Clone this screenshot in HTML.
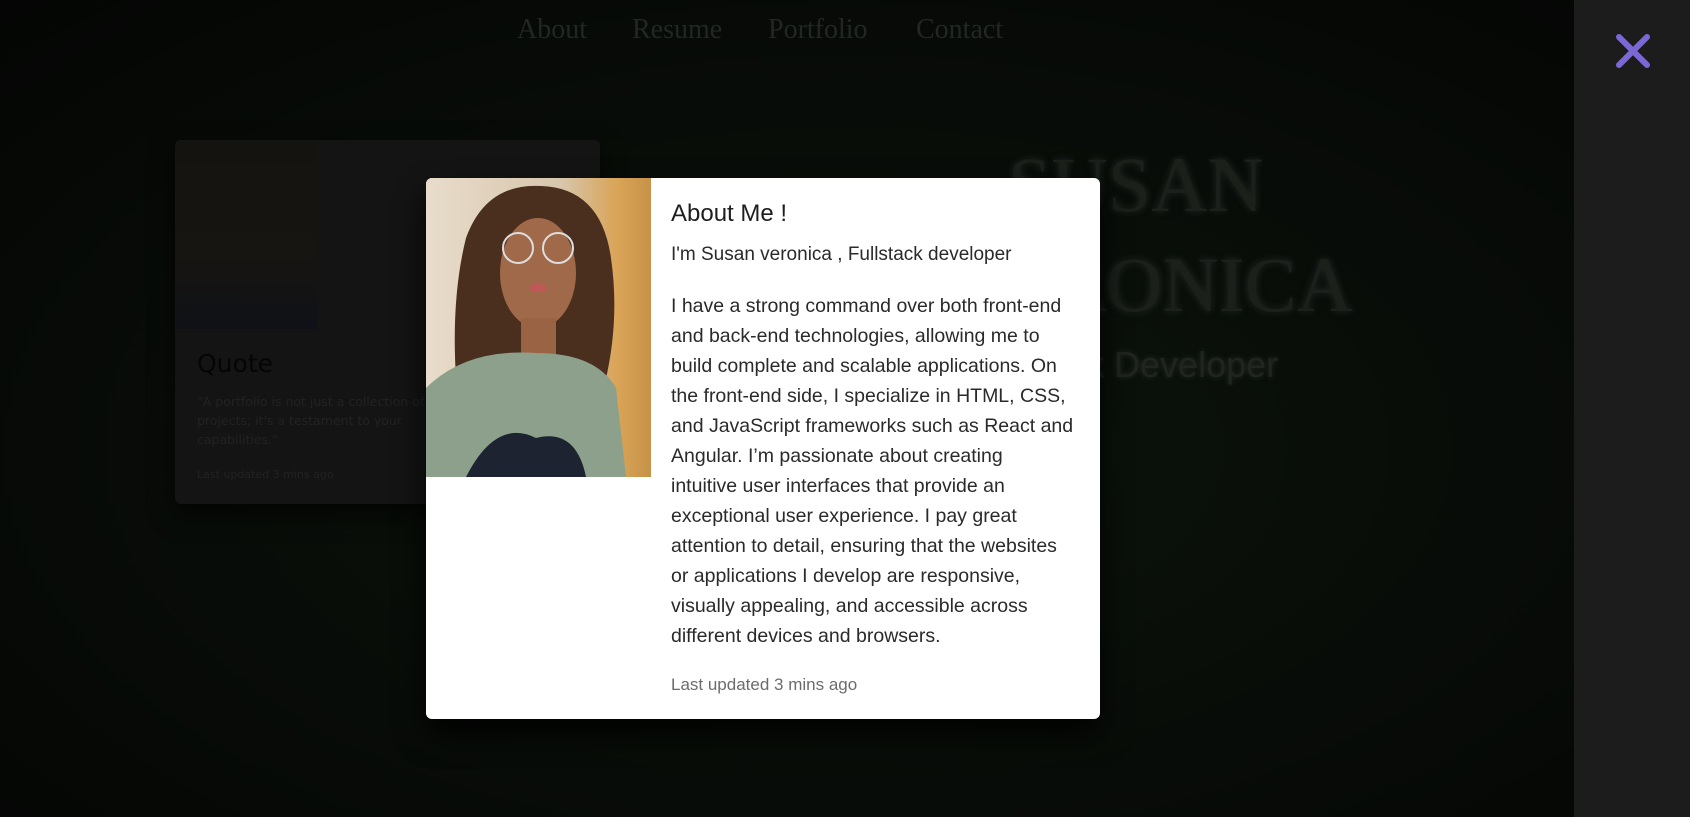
<!DOCTYPE html>
<html><head><meta charset="utf-8"><style>
*{margin:0;padding:0;box-sizing:border-box}
body{width:1690px;height:817px;overflow:hidden;background:radial-gradient(ellipse at 50% 55%,#0c140c 0%,#080c08 55%,#040504 100%);position:relative;font-family:"Liberation Sans",sans-serif}
.nav{position:absolute;top:14px;font-family:"Liberation Serif",serif;font-size:28px;color:#232723}
.side{position:absolute;left:1574px;top:0;width:116px;height:817px;background:#1c1c1c}
.card{position:absolute;left:175px;top:140px;width:425px;height:364px;background:#141414;border-radius:6px;box-shadow:0 10px 25px rgba(0,0,0,.7);overflow:hidden}
.modal{position:absolute;left:426px;top:178px;width:674px;height:541px;background:#fff;border-radius:6px;box-shadow:0 15px 30px rgba(0,0,0,.9)}
.photo{position:absolute;left:0;top:0;width:225px;height:299px;border-top-left-radius:6px;overflow:hidden;background:linear-gradient(90deg,#e8dccb 0%,#d7c6ac 60%,#d9a457 85%,#c69248 100%)}
.txt{position:absolute;left:245px;color:#222;font-family:"Liberation Sans","DejaVu Sans",sans-serif;white-space:nowrap}
.hero{position:absolute;font-family:"Liberation Serif",serif;color:#1b201b;text-shadow:0 0 8px rgba(110,110,110,.3);font-size:78px}
</style></head><body>
<div class="nav" style="left:517px">About</div>
<div class="nav" style="left:632px">Resume</div>
<div class="nav" style="left:768px">Portfolio</div>
<div class="nav" style="left:916px">Contact</div>

<div class="hero" style="left:1008px;top:140px">SUSAN</div>
<div class="hero" style="left:950px;top:240px">VERONICA</div>
<div style="position:absolute;left:962px;top:344px;font-size:36px;color:#202520;text-shadow:0 0 6px rgba(110,110,110,.3)">Fullstack Developer</div>

<div class="card">
 <div style="position:absolute;left:1px;top:1px;width:141px;height:188px;background:linear-gradient(180deg,#15130f,#171512 60%,#0f1116)"></div>
 <div style="position:absolute;left:22px;top:209px;font-family:'DejaVu Sans',sans-serif;font-size:25px;color:#050505">Quote</div>
 <div style="position:absolute;left:22px;top:252px;width:260px;font-family:'DejaVu Sans',sans-serif;font-size:12.5px;line-height:19px;color:#222">"A portfolio is not just a collection of projects; it's a testament to your capabilities."</div>
 <div style="position:absolute;left:22px;top:328px;font-family:'DejaVu Sans',sans-serif;font-size:11px;color:#222">Last updated 3 mins ago</div>
</div>

<div class="modal">
 <div class="photo">
  <svg width="225" height="299" viewBox="0 0 225 299">
   <path d="M40 60 Q60 5 115 8 Q175 10 185 80 Q195 150 175 220 L150 240 L60 240 L30 200 Q25 120 40 60Z" fill="#4a2e1e"/>
   <ellipse cx="112" cy="95" rx="38" ry="55" fill="#a0694a"/>
   <rect x="95" y="140" width="35" height="40" fill="#9a6444"/>
   <path d="M0 210 Q40 170 110 175 Q170 175 190 210 L200 299 L0 299Z" fill="#8da08c"/>
   <path d="M40 299 Q70 240 110 260 Q150 250 160 299Z" fill="#1d2330"/>
   <ellipse cx="112" cy="110" rx="9" ry="4" fill="#c05858"/>
   <circle cx="92" cy="70" r="15" fill="none" stroke="#ddd" stroke-width="2"/>
   <circle cx="132" cy="70" r="15" fill="none" stroke="#ddd" stroke-width="2"/>
  </svg>
 </div>
 <div class="txt" style="top:22px;font-size:24px;color:#1e1e1e">About Me !</div>
 <div class="txt" style="top:66px;font-size:19px;color:#2a2a2a">I'm Susan veronica , Fullstack developer</div>
 <div class="txt" style="top:113px;font-size:19.5px;line-height:30px;color:#2a2a2a">I have a strong command over both front-end<br>and back-end technologies, allowing me to<br>build complete and scalable applications. On<br>the front-end side, I specialize in HTML, CSS,<br>and JavaScript frameworks such as React and<br>Angular. I’m passionate about creating<br>intuitive user interfaces that provide an<br>exceptional user experience. I pay great<br>attention to detail, ensuring that the websites<br>or applications I develop are responsive,<br>visually appealing, and accessible across<br>different devices and browsers.</div>
 <div class="txt" style="top:497px;font-size:17px;color:#6c6c6c">Last updated 3 mins ago</div>
</div>

<div class="side">
 <svg style="position:absolute;left:40px;top:32px" width="38" height="38" viewBox="0 0 38 38"><path d="M5 5 L33 33 M33 5 L5 33" stroke="#7b68d6" stroke-width="6" stroke-linecap="round"/></svg>
</div>
</body></html>
